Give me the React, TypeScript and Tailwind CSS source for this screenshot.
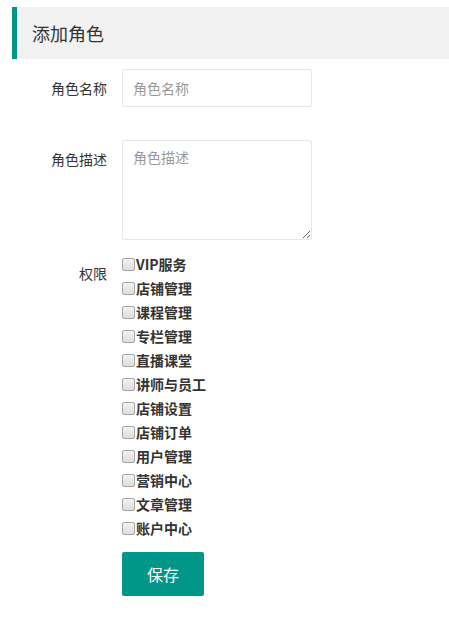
import React from 'react';

export default function App() {
  const perms = [
    'VIP服务',
    '店铺管理',
    '课程管理',
    '专栏管理',
    '直播课堂',
    '讲师与员工',
    '店铺设置',
    '店铺订单',
    '用户管理',
    '营销中心',
    '文章管理',
    '账户中心',
  ];

  return (
    <div
      className="min-h-[623px] bg-white pl-[12px] pt-[7px] text-[14px] text-[#333]"
      style={{ fontFamily: '"Microsoft YaHei", "Noto Sans CJK SC", sans-serif' }}
    >
      <div className="flex h-[52px] items-center border-l-[5px] border-[#009688] bg-[#f2f2f2] pl-[15px]">
        <h1 className="text-[18px] font-normal text-[#333]">添加角色</h1>
      </div>

      <form className="mt-[10px]">
        <div className="flex">
          <label className="w-[110px] pr-[15px] text-right leading-[38px]">角色名称</label>
          <input
            type="text"
            placeholder="角色名称"
            className="h-[38px] w-[190px] rounded-[2px] border border-[#e6e6e6] px-[10px] text-[14px] placeholder:text-[#999] outline-none"
          />
        </div>

        <div className="mt-[33px] flex">
          <label className="w-[110px] pr-[15px] pt-[9px] text-right leading-[20px]">角色描述</label>
          <textarea
            placeholder="角色描述"
            className="h-[100px] w-[190px] rounded-[2px] border border-[#e6e6e6] px-[10px] py-[6px] text-[14px] leading-[20px] placeholder:text-[#999] outline-none"
          />
        </div>

        <div className="mt-[12px] flex">
          <label className="w-[110px] pr-[15px] pt-[11px] text-right leading-[20px]">权限</label>
          <div className="flex flex-col">
            {perms.map((p) => (
              <label key={p} className="flex h-[24px] items-center font-bold text-[14px] text-[#333]">
                <input
                  type="checkbox"
                  className="m-0 mr-[1px] h-[13px] w-[13px] appearance-none rounded-[2px] border border-[#a6a6a6] bg-gradient-to-b from-[#f4f4f4] to-[#dcdcdc]"
                />
                {p}
              </label>
            ))}
          </div>
        </div>

        <div className="mt-[12px] pl-[110px]">
          <button
            type="button"
            className="h-[44px] w-[82px] rounded-[2px] bg-[#009688] text-[16px] text-white"
          >
            保存
          </button>
        </div>
      </form>
    </div>
  );
}
